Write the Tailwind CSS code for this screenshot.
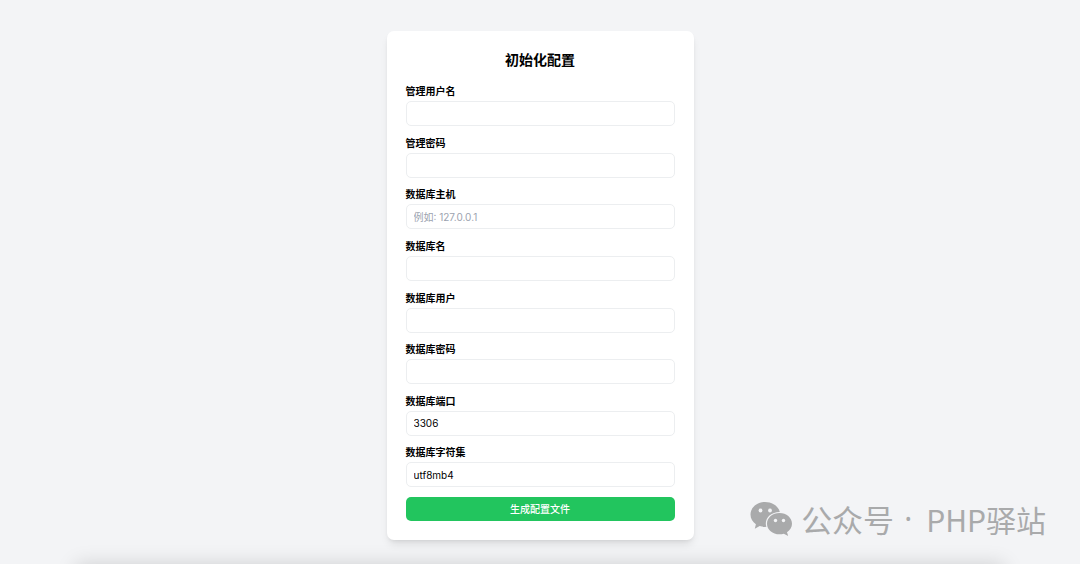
<!DOCTYPE html>
<html lang="zh-CN">
<head>
<meta charset="utf-8">
<meta name="viewport" content="width=device-width, initial-scale=1">
<title>初始化配置</title>
<script src="https://cdn.jsdelivr.net/npm/@tailwindcss/browser@4"></script>
</head>
<body class="relative flex min-h-screen justify-center overflow-hidden bg-[#f3f4f6] px-4 pt-[31px] pb-6 font-['Inter','Noto_Sans_CJK_SC',sans-serif] text-[10px] text-black">
  <main class="flex w-full max-w-[307px] flex-col rounded-[7px] bg-white p-[19px] shadow-[0_6px_9px_-2px_rgba(0,0,0,0.1),0_2px_4px_-2px_rgba(0,0,0,0.1)]">
    <h1 class="mb-3.5 text-center text-[14px] leading-5 font-bold">初始化配置</h1>
    <form class="flex flex-1 flex-col justify-between">
      <div>
        <label for="admin-user" class="block leading-[15px] font-bold">管理用户名</label>
        <input id="admin-user" type="text" class="mt-0.5 block h-[25px] w-full rounded-[5px] border border-[#eceef0] bg-white px-[7px]">
      </div>
      <div>
        <label for="admin-pass" class="block leading-[15px] font-bold">管理密码</label>
        <input id="admin-pass" type="password" class="mt-0.5 block h-[25px] w-full rounded-[5px] border border-[#eceef0] bg-white px-[7px]">
      </div>
      <div>
        <label for="db-host" class="block leading-[15px] font-bold">数据库主机</label>
        <input id="db-host" type="text" placeholder="例如: 127.0.0.1" class="mt-0.5 block h-[25px] w-full rounded-[5px] border border-[#eceef0] bg-white px-[7px] placeholder:text-[#9ca3af]">
      </div>
      <div>
        <label for="db-name" class="block leading-[15px] font-bold">数据库名</label>
        <input id="db-name" type="text" class="mt-0.5 block h-[25px] w-full rounded-[5px] border border-[#eceef0] bg-white px-[7px]">
      </div>
      <div>
        <label for="db-user" class="block leading-[15px] font-bold">数据库用户</label>
        <input id="db-user" type="text" class="mt-0.5 block h-[25px] w-full rounded-[5px] border border-[#eceef0] bg-white px-[7px]">
      </div>
      <div>
        <label for="db-pass" class="block leading-[15px] font-bold">数据库密码</label>
        <input id="db-pass" type="password" class="mt-0.5 block h-[25px] w-full rounded-[5px] border border-[#eceef0] bg-white px-[7px]">
      </div>
      <div>
        <label for="db-port" class="block leading-[15px] font-bold">数据库端口</label>
        <input id="db-port" type="text" value="3306" class="mt-0.5 block h-[25px] w-full rounded-[5px] border border-[#eceef0] bg-white px-[7px]">
      </div>
      <div>
        <label for="db-charset" class="block leading-[15px] font-bold">数据库字符集</label>
        <input id="db-charset" type="text" value="utf8mb4" class="mt-0.5 block h-[25px] w-full rounded-[5px] border border-[#eceef0] bg-white px-[7px]">
      </div>
      <button type="submit" class="h-6 w-full rounded-[5px] bg-[#22c55e] font-medium text-white">生成配置文件</button>
    </form>
  </main>

  <!-- Shadow rising from the lower edge of the window -->
  <div class="absolute inset-x-[88px] bottom-0 h-0 shadow-[0_12px_20px_12px_rgba(0,0,0,0.15)]"></div>

  <!-- Account watermark -->
  <div class="absolute right-[34px] bottom-[25px] flex items-center text-[30px] leading-10 text-[#a9aaab] font-['Noto_Sans_CJK_SC',sans-serif]">
    <svg class="mr-2 h-9 w-[43px]" viewBox="0 0 43 36" aria-hidden="true">
      <path fill="#a9aaab" d="M15 1C7 1 .5 6.600.5 13.600c0 4 2.100 7.400 5.400 9.700L4.800 27.800l4.900-2.700c1.700.5 3.400.8 5.300.8l1.400-.1c-.4-1.100-.6-2.200-.6-3.400 0-6.500 6-11.500 13.500-11.500h.5C28.300 5 22.200 1 15 1Z"/>
      <path fill="#a9aaab" d="M42 22.700c0-5.900-5.600-10.600-12.500-10.600S17 16.800 17 22.700s5.600 10.600 12.500 10.600c1.500 0 3-.2 4.300-.6l4.400 2.400-1.200-3.900c3-1.900 5-5 5-8.500Z"/>
      <g fill="#f3f4f6"><circle cx="10.500" cy="9.500" r="1.900"/><circle cx="20" cy="9.500" r="1.900"/><circle cx="25.500" cy="19.500" r="1.700"/><circle cx="33.500" cy="19.500" r="1.700"/></g>
    </svg>
    <span class="text-[31px]">公众号</span>
    <span class="ml-2.5 mr-3.5 font-['Noto_Sans']">·</span>
    <span>PHP驿站</span>
  </div>
</body>
</html>
